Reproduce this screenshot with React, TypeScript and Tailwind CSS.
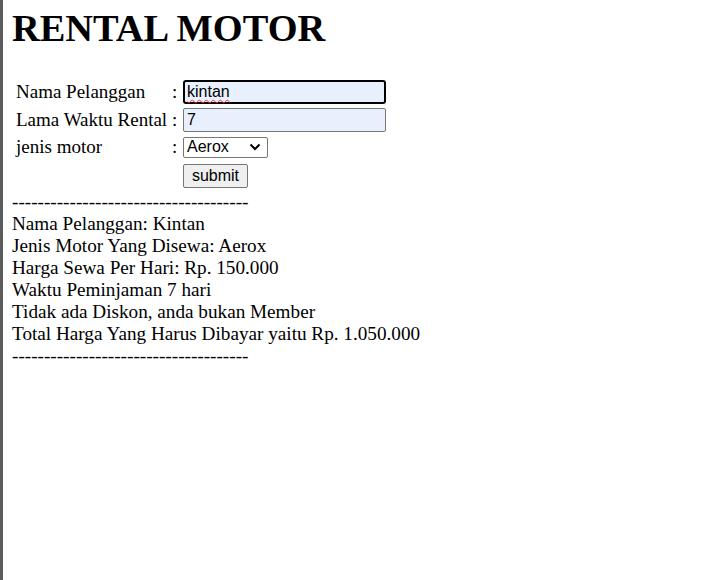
import React from 'react';

const serif = "font-['Liberation_Serif','Times_New_Roman',serif]";
const sans = "font-['Liberation_Sans',Arial,sans-serif]";

const dashes = '-------------------------------------';

const App: React.FC = () => {
  return (
    <div className={`min-h-[580px] w-[711px] flex bg-white text-black ${serif}`}>
      {/* window edge */}
      <div className="w-[3px] shrink-0 bg-[#5c5c5c]" />

      <div className="flex flex-col pl-[9px] pt-[6px]">
        <h1 className="text-[38.4px] font-bold leading-[44px]">RENTAL MOTOR</h1>

        {/* form */}
        <div className="mt-[30px] grid grid-cols-[160px_11px_auto] items-center gap-y-[4px] text-[19px] leading-[22px]">
          <div className="pl-[4px]">Nama Pelanggan</div>
          <div>:</div>
          <div className={`h-[24px] w-[203px] rounded-[3px] border-2 border-black bg-[#e8f0fe] px-[2px] text-[16px] leading-[20px] ${sans}`}>
            <span className="underline decoration-wavy decoration-red-500 decoration-1 underline-offset-2">kintan</span>
          </div>

          <div className="pl-[4px]">Lama Waktu Rental</div>
          <div>:</div>
          <input
            readOnly
            value="7"
            className={`h-[24px] w-[203px] rounded-[2px] border border-[#767676] bg-[#e8f0fe] px-[3px] text-[16px] outline-none ${sans}`}
          />

          <div className="pl-[4px]">jenis motor</div>
          <div>:</div>
          <div className={`flex h-[21px] w-[85px] items-center justify-between rounded-[2px] border border-[#767676] bg-white pl-[3px] pr-[6px] text-[16px] ${sans}`}>
            <span>Aerox</span>
            <svg width="12" height="8" viewBox="0 0 12 8" aria-hidden>
              <path d="M1.5 1.5 L6 6 L10.5 1.5" fill="none" stroke="black" strokeWidth="2" />
            </svg>
          </div>

          <div />
          <div />
          <div className="pt-[2px]">
            <button
              type="button"
              className={`h-[24px] w-[65px] rounded-[2px] border border-[#767676] bg-[#efefef] text-[16px] leading-[20px] ${sans}`}
            >
              submit
            </button>
          </div>
        </div>

        {/* result */}
        <div className="mt-[3px] text-[19.2px] leading-[22px]">
          <div>{dashes}</div>
          <div>Nama Pelanggan: Kintan</div>
          <div>Jenis Motor Yang Disewa: Aerox</div>
          <div>Harga Sewa Per Hari: Rp. 150.000</div>
          <div>Waktu Peminjaman 7 hari</div>
          <div>Tidak ada Diskon, anda bukan Member</div>
          <div>Total Harga Yang Harus Dibayar yaitu Rp. 1.050.000</div>
          <div>{dashes}</div>
        </div>
      </div>
    </div>
  );
};

export default App;
